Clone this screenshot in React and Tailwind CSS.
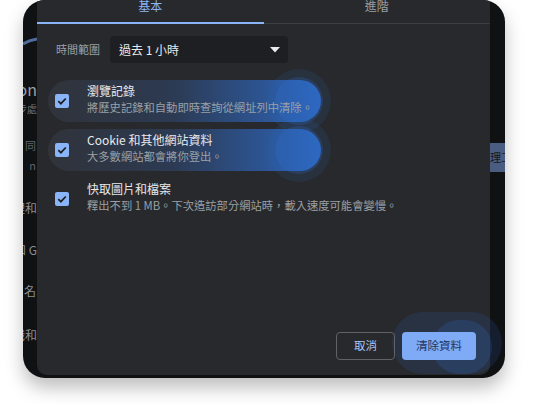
import React from 'react'

const FONT = { fontFamily: '"Noto Sans CJK TC", "Noto Sans", sans-serif' }

const ROWS = [
  { title: '瀏覽記錄', sub: '將歷史記錄和自動即時查詢從網址列中清除。', glow: true },
  { title: 'Cookie 和其他網站資料', sub: '大多數網站都會將你登出。', glow: true },
  { title: '快取圖片和檔案', sub: '釋出不到 1 MB。下次造訪部分網站時，載入速度可能會變慢。', glow: false },
]

function Check() {
  return (
    <svg width="14" height="14" viewBox="0 0 14 14" className="shrink-0">
      <rect x="0" y="0" width="14" height="14" rx="2" fill="#8ab4f8" />
      <path d="M3.3 7.2 L5.9 9.7 L10.8 4.5" fill="none" stroke="#202124" strokeWidth="1.8" />
    </svg>
  )
}

function Row({ title, sub, glow }) {
  return (
    <div className="relative h-[49px] flex items-center">
      {glow && (
        <>
          {/* highlight pill + glow */}
          <div className="absolute left-[11px] top-[4px] w-[273px] h-[42px] rounded-full bg-[linear-gradient(90deg,#30333a_0%,#2c3a52_45%,#2d65bb_100%)]" />
          <div className="absolute left-[230px] top-[-7px] w-[64px] h-[64px] rounded-full bg-[rgba(45,105,200,0.12)]" />
          <div className="absolute left-[238px] top-[1px] w-[48px] h-[48px] rounded-full bg-[rgba(50,115,215,0.22)]" />
        </>
      )}
      <div className="relative flex items-center gap-[18px] pl-[18px]">
        <Check />
        <div className="flex flex-col -mt-[3px]">
          <span className="text-[12px] leading-[16px] text-[#e8eaed]">{title}</span>
          <span className="text-[11.3px] leading-[16px] text-[#9aa0a6] whitespace-nowrap">{sub}</span>
        </div>
      </div>
    </div>
  )
}

export default function App() {
  return (
    <div className="w-[542px] h-[404px] bg-white overflow-hidden" style={FONT}>
      <div className="ml-[23px] w-[482px] h-[378px] rounded-[22px] bg-[#101113] overflow-hidden flex shadow-[0_10px_18px_rgba(0,0,0,0.25)]">
        {/* background page, left */}
        <div className="w-[14px] shrink-0 flex flex-col items-end overflow-hidden text-[#8a8e94]">
          <svg width="14" height="20" viewBox="0 0 14 20" className="mt-[30px] shrink-0">
            <path d="M0 14 Q6 10 14 9" fill="none" stroke="#4f6c9c" strokeWidth="3" />
          </svg>
          <span className="mt-[31px] text-[16px] leading-[16px] whitespace-nowrap text-[#9aa0a6]">Chron</span>
          <span className="mt-[6px] text-[10px] leading-[12px] whitespace-nowrap text-[#6b6f75]">同步處</span>
          <span className="mt-[24px] mr-[1px] text-[11px] leading-[12px] whitespace-nowrap text-[#5f6368]">同</span>
          <span className="mt-[8px] mr-[1px] text-[11px] leading-[12px] whitespace-nowrap text-[#5f6368]">n</span>
          <span className="mt-[30px] text-[12px] leading-[14px] whitespace-nowrap">管理和</span>
          <span className="mt-[28px] text-[12px] leading-[14px] whitespace-nowrap">網站和 G</span>
          <span className="mt-[27px] mr-[1px] text-[12px] leading-[14px] whitespace-nowrap">名</span>
          <span className="mt-[30px] text-[12px] leading-[14px] whitespace-nowrap">識和</span>
        </div>

        {/* dialog */}
        <div className="w-[453px] h-[375px] shrink-0 bg-[#28292c] rounded-b-[10px] flex flex-col">
          <div className="h-6 flex border-b border-[#3c4043]">
            <div className="flex-1 flex justify-center border-b-2 border-[#8ab4f8] -mb-px">
              <span className="text-[12px] leading-[12px] text-[#8ab4f8]">基本</span>
            </div>
            <div className="flex-1 flex justify-center">
              <span className="text-[12px] leading-[12px] text-[#9aa0a6]">進階</span>
            </div>
          </div>

          <div className="mt-3 flex items-center pl-[19px]">
            <span className="w-[54px] text-[11px] text-[#9aa0a6]">時間範圍</span>
            <div className="w-[178px] h-[27px] rounded-[4px] bg-[#1e1f22] flex items-center justify-between pl-[9px] pr-[8px]">
              <span className="text-[12px] text-[#e8eaed]">過去 1 小時</span>
              <svg width="10" height="6" viewBox="0 0 10 6">
                <path d="M0 0 L10 0 L5 5.5 Z" fill="#e8eaed" />
              </svg>
            </div>
          </div>

          <div className="mt-[13px] flex flex-col">
            {ROWS.map((r) => (
              <Row key={r.title} {...r} />
            ))}
          </div>

          <div className="flex-1" />

          <div className="relative flex justify-end gap-[7px] pr-[14px] pb-[15px]">
            {/* glow behind primary button */}
            <div className="absolute right-[-12px] top-[-20px] w-[110px] h-[62px] rounded-full bg-[rgba(45,105,200,0.15)]" />
            <div className="absolute right-[-2px] top-[-12px] w-[60px] h-[54px] rounded-full bg-[rgba(45,105,200,0.22)]" />
            <button className="relative w-[59px] h-[28px] rounded-[4px] border border-[#5f6368] text-[11.5px] text-[#a8c7fa]">
              取消
            </button>
            <button className="relative w-[74px] h-[28px] rounded-[4px] bg-[#7eaaf6] text-[11.5px] text-[#1d3560]">
              清除資料
            </button>
          </div>
        </div>

        {/* background page, right */}
        <div className="w-[15px] shrink-0 flex flex-col overflow-hidden">
          <div className="mt-[143px] h-[29px] bg-[#4a5d80] flex items-center">
            <span className="text-[11px] text-[#15171b] whitespace-nowrap">理工</span>
          </div>
        </div>
      </div>
    </div>
  )
}
